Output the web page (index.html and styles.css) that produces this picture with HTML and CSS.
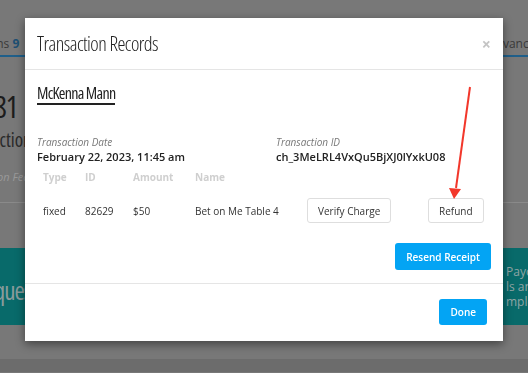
FILE: index.html
```html
<!DOCTYPE html>
<html lang="en">
<head>
    <meta charset="UTF-8">
    <meta name="viewport" content="width=device-width, initial-scale=1.0">
    <title>Transaction Records</title>
    <link rel="stylesheet" href="styles.css">
</head>
<body>
    <div class="page">
        <div class="tabs">
            <span class="tab tab-left">Transactions <b>9</b></span>
            <span class="tab tab-right">Advanced</span>
        </div>
        <div class="stats">
            <div class="stat-num">$1,281</div>
            <div class="stat-label">Transaction Income</div>
            <div class="stat-note">Application Fees</div>
        </div>
        <div class="banner">
            <div class="banner-left">Requests</div>
            <div class="banner-right">
                <div>Payouts</div>
                <div>ls and</div>
                <div>mplete</div>
            </div>
        </div>
        <div class="page-bottom"></div>
    </div>

    <div class="modal">
        <div class="modal-header">
            <h4>Transaction Records</h4>
            <span class="close">&times;</span>
        </div>
        <div class="modal-body">
            <h3 class="customer">McKenna Mann</h3>
            <div class="meta">
                <div>
                    <div class="meta-label">Transaction Date</div>
                    <div class="meta-value">February 22, 2023, 11:45 am</div>
                </div>
                <div>
                    <div class="meta-label">Transaction ID</div>
                    <div class="meta-value">ch_3MeLRL4VxQu5BjXJ0lYxkU08</div>
                </div>
            </div>
            <table class="records">
                <colgroup>
                    <col class="c-type"><col class="c-id"><col class="c-amount"><col class="c-name"><col class="c-verify"><col>
                </colgroup>
                <thead>
                    <tr><th>Type</th><th>ID</th><th>Amount</th><th>Name</th><th></th><th></th></tr>
                </thead>
                <tbody>
                    <tr>
                        <td>fixed</td>
                        <td>82629</td>
                        <td>$50</td>
                        <td>Bet on Me Table 4</td>
                        <td><button class="btn-default">Verify Charge</button></td>
                        <td><button class="btn-default">Refund</button></td>
                    </tr>
                </tbody>
            </table>
            <div class="actions">
                <button class="btn-primary">Resend Receipt</button>
            </div>
        </div>
        <div class="modal-footer">
            <button class="btn-primary">Done</button>
        </div>
    </div>

    <svg class="arrow" width="528" height="373" viewBox="0 0 528 373">
        <line x1="470" y1="87" x2="456" y2="188" stroke="#f2372b" stroke-width="2"/>
        <polygon points="449,188 461,189 454,199" fill="#f2372b"/>
    </svg>
</body>
</html>
```

FILE: styles.css
```css
body {
    margin: 0;
    width: 528px;
    height: 373px;
    overflow: hidden;
    background: #787878;
    font-family: "Open Sans", "Liberation Sans", sans-serif;
}

.page {
    height: 373px;
}

.tabs {
    display: flex;
    justify-content: space-between;
    height: 55px;
    border-bottom: 2px solid #76808a;
    font-size: 12px;
    color: #3a3a3a;
    white-space: nowrap;
}

.tab {
    padding-top: 35px;
    border-bottom: 2px solid #1f5f8a;
    margin-bottom: -2px;
}

.tab-left {
    margin-left: -62px;
    width: 87px;
}

.tab-left b {
    color: #1d4f73;
}

.tab-right {
    width: 55px;
    margin-right: -15px;
}

/* condensed headings, close to the app's narrow display face */
.stat-num,
.stat-label,
.banner-left,
.modal-header h4,
.customer {
    font-family: "Open Sans", sans-serif;
    font-stretch: 75%;
}

.stats {
    height: 111px;
    padding-top: 34px;
    border-bottom: 1px solid #8a8a8a;
    white-space: nowrap;
}

.stat-num {
    margin-left: -47px;
    font-size: 30px;
    line-height: 32px;
    letter-spacing: -1px;
    color: #1c1c1c;
}

.stat-label {
    margin-top: 6px;
    margin-left: -44px;
    font-size: 19px;
    line-height: 22px;
    color: #2a2a2a;
}

.stat-note {
    margin-top: 18px;
    margin-left: -45px;
    font-size: 11px;
    font-style: italic;
    color: #9a9a9a;
}

.banner {
    display: flex;
    justify-content: space-between;
    margin-top: 45px;
    height: 77px;
    background: #086a6a;
    white-space: nowrap;
}

.banner-left {
    margin-left: -26px;
    padding-top: 27px;
    font-size: 25px;
    line-height: 30px;
    letter-spacing: -1px;
    color: #8a9c9c;
}

.banner-right {
    width: 22px;
    padding-top: 16px;
    font-size: 12px;
    line-height: 15px;
    color: #8fa5a5;
}

.page-bottom {
    margin-top: 34px;
    height: 13px;
    background: #6c6c6c;
}

.modal {
    position: fixed;
    left: 25px;
    top: 18px;
    width: 478px;
    background: #ffffff;
    box-shadow: 0 3px 9px rgba(0, 0, 0, 0.45);
}

.modal-header {
    display: flex;
    justify-content: space-between;
    align-items: center;
    padding: 14px 12px 13px;
    border-bottom: 1px solid #e5e5e5;
}

.modal-header h4 {
    margin: 0;
    font-weight: 300;
    font-size: 20px;
    line-height: 24px;
    letter-spacing: -0.5px;
    color: #222;
}

.close {
    font-size: 16px;
    font-weight: bold;
    color: #c4c4c4;
    line-height: 16px;
}

.modal-body {
    padding: 12px 12px 13px;
}

.customer {
    display: inline-block;
    margin: 0;
    padding-bottom: 1px;
    border-bottom: 2px solid #222;
    font-weight: normal;
    font-size: 16px;
    line-height: 18px;
    letter-spacing: -0.7px;
    color: #222;
}

.meta {
    display: grid;
    grid-template-columns: 239px 1fr;
    margin-top: 30px;
}

.meta-label {
    font-size: 10px;
    font-style: italic;
    line-height: 14px;
    color: #777;
}

.meta-value {
    font-size: 11px;
    font-weight: 600;
    line-height: 16px;
    color: #222;
}

.records {
    border-collapse: collapse;
    width: 100%;
    margin-top: 2px;
    font-size: 10px;
}

.c-type { width: 42px; }
.c-id { width: 48px; }
.c-amount { width: 62px; }
.c-name { width: 112px; }
.c-verify { width: 121px; }

.records th {
    text-align: left;
    font-weight: bold;
    color: #cfcfcf;
    padding: 3px 6px;
    line-height: 14px;
}

.records td {
    color: #333;
    padding: 11px 6px 2px;
    height: 24px;
}

.btn-default {
    font-family: "Open Sans", "Liberation Sans", sans-serif;
    font-size: 10px;
    color: #333;
    background: #fff;
    border: 1px solid #dedede;
    border-radius: 3px;
    height: 25px;
    padding: 0 10px;
}

.actions {
    display: flex;
    justify-content: flex-end;
    margin-top: 18px;
}

.btn-primary {
    font-family: "Open Sans", "Liberation Sans", sans-serif;
    font-size: 10px;
    font-weight: 600;
    color: #fff;
    background: #03a4f4;
    border: none;
    border-radius: 3px;
    height: 27px;
    padding: 0 11px;
}

.modal-footer {
    display: flex;
    justify-content: flex-end;
    padding: 15px 16px 16px;
    border-top: 1px solid #e5e5e5;
}

.modal-footer .btn-primary {
    height: 26px;
}

.arrow {
    position: fixed;
    left: 0;
    top: 0;
    pointer-events: none;
}
```
